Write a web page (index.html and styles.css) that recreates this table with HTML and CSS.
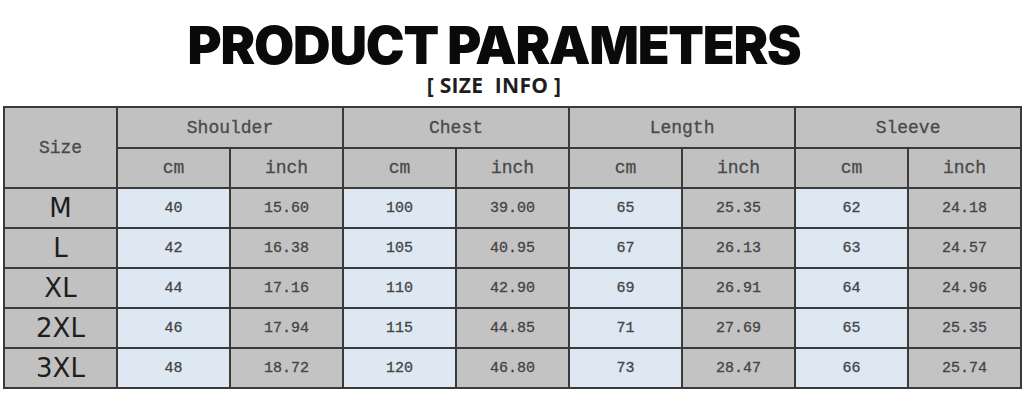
FILE: index.html
```html
<!DOCTYPE html>
<html lang="en">
<head>
<meta charset="utf-8">
<title>Product Parameters</title>
<link rel="stylesheet" href="styles.css">
</head>
<body>
<header class="heading">
  <h1 class="title">PRODUCT PARAMETERS</h1>
  <p class="subtitle">[ SIZE&nbsp; INFO ]</p>
</header>
<table class="size-table">
  <colgroup>
    <col><col><col><col><col><col><col><col><col>
  </colgroup>
  <thead>
    <tr class="group-row">
      <th rowspan="2" class="size-head">Size</th>
      <th colspan="2">Shoulder</th>
      <th colspan="2">Chest</th>
      <th colspan="2">Length</th>
      <th colspan="2">Sleeve</th>
    </tr>
    <tr class="unit-row">
      <th>cm</th><th>inch</th>
      <th>cm</th><th>inch</th>
      <th>cm</th><th>inch</th>
      <th>cm</th><th>inch</th>
    </tr>
  </thead>
  <tbody>
    <tr>
      <th class="size">M</th>
      <td class="cm">40</td><td class="in">15.60</td>
      <td class="cm">100</td><td class="in">39.00</td>
      <td class="cm">65</td><td class="in">25.35</td>
      <td class="cm">62</td><td class="in">24.18</td>
    </tr>
    <tr>
      <th class="size">L</th>
      <td class="cm">42</td><td class="in">16.38</td>
      <td class="cm">105</td><td class="in">40.95</td>
      <td class="cm">67</td><td class="in">26.13</td>
      <td class="cm">63</td><td class="in">24.57</td>
    </tr>
    <tr>
      <th class="size">XL</th>
      <td class="cm">44</td><td class="in">17.16</td>
      <td class="cm">110</td><td class="in">42.90</td>
      <td class="cm">69</td><td class="in">26.91</td>
      <td class="cm">64</td><td class="in">24.96</td>
    </tr>
    <tr>
      <th class="size">2XL</th>
      <td class="cm">46</td><td class="in">17.94</td>
      <td class="cm">115</td><td class="in">44.85</td>
      <td class="cm">71</td><td class="in">27.69</td>
      <td class="cm">65</td><td class="in">25.35</td>
    </tr>
    <tr>
      <th class="size">3XL</th>
      <td class="cm">48</td><td class="in">18.72</td>
      <td class="cm">120</td><td class="in">46.80</td>
      <td class="cm">73</td><td class="in">28.47</td>
      <td class="cm">66</td><td class="in">25.74</td>
    </tr>
  </tbody>
</table>
</body>
</html>
```
FILE: styles.css
```css
html, body {
  margin: 0;
  padding: 0;
  background: #ffffff;
}

body {
  width: 1029px;
  height: 402px;
  overflow: hidden;
}

.heading {
  width: 988px;
  height: 106px;
  text-align: center;
  display: flex;
  flex-direction: column;
  align-items: center;
}

.title {
  margin: 0;
  padding-top: 20px;
  font-family: Inter, Roboto, "Liberation Sans", sans-serif;
  font-weight: 900;
  font-size: 52px;
  line-height: 52px;
  letter-spacing: -1.2px;
  color: #0a0a0a;
}

.subtitle {
  margin: 0;
  margin-top: 1px;
  font-family: "Open Sans", "Liberation Sans", sans-serif;
  font-weight: 700;
  font-size: 21px;
  line-height: 24px;
  letter-spacing: 0.3px;
  color: #1e1e1e;
}

.size-table {
  margin-left: 3px;
  width: 1017px;
  table-layout: fixed;
  border-collapse: collapse;
  border: 2px solid #4a4a4a;
}

.size-table col {
  width: 113px;
}

.size-table th,
.size-table td {
  border: 2px solid #3a3a3a;
  padding: 0;
  text-align: center;
  vertical-align: middle;
}

.size-table thead th {
  background: #c1c1c1;
  font-family: "Liberation Mono", "DejaVu Sans Mono", monospace;
  font-weight: normal;
  font-size: 18px;
  color: #4a4a4a;
  -webkit-text-stroke: 0.3px #4a4a4a;
}

.group-row {
  height: 41px;
}

.unit-row {
  height: 40px;
}

.size-table tbody tr {
  height: 40px;
}

.size-table .size {
  background: #c1c1c1;
  font-family: "DejaVu Sans", Verdana, sans-serif;
  font-weight: normal;
  font-size: 26px;
  line-height: 26px;
  color: #1e1e1e;
}

.size-table td {
  font-family: "Liberation Mono", "DejaVu Sans Mono", monospace;
  font-size: 15px;
  color: #444444;
  -webkit-text-stroke: 0.3px #444444;
}

.size-table td.cm {
  background: #dde8f3;
}

.size-table td.in {
  background: #c3c3c3;
}
```
